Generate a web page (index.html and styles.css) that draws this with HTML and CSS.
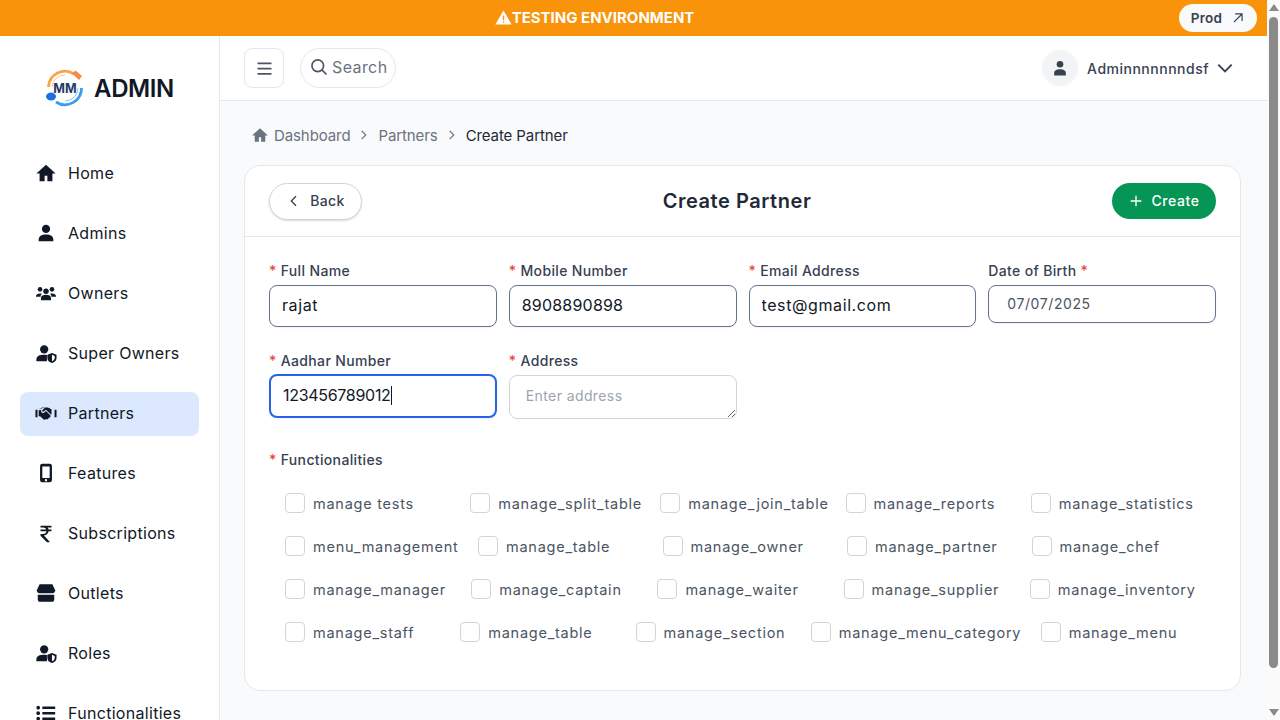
FILE: index.html
```html
<!DOCTYPE html>
<html lang="en">
<head>
    <title>Create Partner</title>
    <link rel="stylesheet" href="styles.css">
</head>
<body>
<div class="page">
<div class="banner">
    <div class="banner-title">
        <svg class="banner-icon" viewBox="0 0 24 24"><path fill="#fff" fill-rule="evenodd" d="M12 2 23.500 22H.5zM11 9v7h2V9zm0 8.500v2h2v-2z"/></svg>
        <span>TESTING ENVIRONMENT</span>
    </div>
    <a class="prod-link" href="#">Prod
        <svg viewBox="0 0 24 24" class="prod-icon"><path d="M5 19 18 6M7 5h12v12" fill="none" stroke="currentColor" stroke-width="2"/></svg>
    </a>
</div>
<div class="app">
    <aside class="sidebar">
        <div class="brand">
            <svg class="logo" viewBox="0 0 40 40">
                <path d="M3.500 19A16.500 16.500 0 0 1 29 6" fill="none" stroke="#f9a34a" stroke-width="2.800"/>
                <path d="M7 19A13 13 0 0 1 20 7" fill="none" stroke="#fbc58c" stroke-width="1"/>
                <path d="M27 5.500l3.500-3 6.500 5.500-3 4z" fill="#f58a4b"/>
                <path d="M36.500 20A16.500 16.500 0 0 1 11 34" fill="none" stroke="#3b9bf0" stroke-width="2.800"/>
                <path d="M33 20A13 13 0 0 1 20 33" fill="none" stroke="#8cc6f7" stroke-width="1"/>
                <ellipse cx="6" cy="28.500" rx="5" ry="4" fill="#1f6fe0"/>
                <text x="20" y="24.500" class="logo-text">MM</text>
            </svg>
            <span class="brand-name">ADMIN</span>
        </div>
        <nav class="nav">
            <a class="nav-item" href="#"><svg class="nav-icon" viewBox="0 0 24 24"><path d="M12 3 1.500 12.500H5V21h5.500v-6h3v6H19v-8.500h3.500z"/></svg>Home</a>
            <a class="nav-item" href="#"><svg class="nav-icon" viewBox="0 0 24 24"><circle cx="12" cy="7.500" r="4.500"/><path d="M4 21v-2c0-3.500 3-5.500 8-5.500s8 2 8 5.500v2z"/></svg>Admins</a>
            <a class="nav-item" href="#"><svg class="nav-icon" viewBox="0 0 24 24"><circle cx="5.500" cy="8" r="2.500"/><circle cx="18.500" cy="8" r="2.500"/><circle cx="12" cy="10" r="3"/><path d="M1 16c0-2.500 2-3.500 4.500-3.500 1 0 1.500.2 2 .4C6.500 14 6 15 6 16zM23 16c0-2.500-2-3.500-4.500-3.500-1 0-1.500.2-2 .4 1 1.100 1.500 2.100 1.500 3.100zM6.500 20v-2.500c0-2.500 2.500-3.500 5.500-3.500s5.500 1 5.500 3.500V20z"/></svg>Owners</a>
            <a class="nav-item" href="#"><svg class="nav-icon" viewBox="0 0 24 24"><circle cx="10" cy="8" r="4.500"/><path d="M1.500 21v-2c0-3.500 3.500-5 8.500-5 1 0 2 .1 3 .3V21z"/><path d="M18.500 12l5 2v3.500c0 2.800-2.100 4.800-5 5.500-2.900-.7-5-2.700-5-5.500V14zm0 2v7c1.700-.6 3-1.800 3-3.500V15.300z" fill-rule="evenodd"/></svg>Super Owners</a>
            <a class="nav-item active" href="#"><svg class="nav-icon" viewBox="0 0 24 24"><path d="M.5 8.500h2.200v8H.5zM21.300 8.500h2.200v8h-2.200zM4 8l4-2h3l-3 3c-.7.8.4 2 1.300 1.300L12 8.500l5.500 5.500.5-1V8l-4-2h-1l-2 0zM4 9v6.500l1.500 0 4 3.500c.8.600 2 .3 2.300-.5l1 .4c.8.300 1.700-.3 1.700-1.200.8.200 1.700-.5 1.600-1.400.7 0 1.300-.9.800-1.700L12 9.800 9.800 11.600c-2 1.300-4-1-2.800-2.800z"/></svg>Partners</a>
            <a class="nav-item" href="#"><svg class="nav-icon" viewBox="0 0 24 24"><path fill-rule="evenodd" d="M8 2h8a2.500 2.500 0 0 1 2.500 2.500v15A2.500 2.500 0 0 1 16 22H8a2.500 2.500 0 0 1-2.500-2.500v-15A2.500 2.500 0 0 1 8 2zm0 3v12.500h8V5zm4 13.500a1.300 1.300 0 1 0 0 2.600 1.300 1.300 0 0 0 0-2.600z"/></svg>Features</a>
            <a class="nav-item" href="#"><svg class="nav-icon" viewBox="0 0 24 24"><path d="M6 4h12v2h-4.300c.6.700 1 1.400 1.200 2.200H18v2h-3.100c-.4 2.600-2.400 4.200-5.100 4.500L16 21.500V22h-3l-7-7v-2h3c1.900 0 3.200-1 3.600-2.800H6v-2h6.300C11.800 7 10.600 6 9 6H6z"/></svg>Subscriptions</a>
            <a class="nav-item" href="#"><svg class="nav-icon" viewBox="0 0 24 24"><path d="M5 2.500h14l3 6.500c0 2-1.300 3.200-3 3.200H5c-1.700 0-3-1.200-3-3.200z"/><path d="M3 14h18v5c0 1.500-1 2.500-2.500 2.500h-13C4 21.500 3 20.500 3 19z"/></svg>Outlets</a>
            <a class="nav-item" href="#"><svg class="nav-icon" viewBox="0 0 24 24"><circle cx="10" cy="8" r="4.500"/><path d="M1.500 21v-2c0-3.500 3.500-5 8.500-5 1 0 2 .1 3 .3V21z"/><path d="M18.500 12l5 2v3.500c0 2.800-2.100 4.800-5 5.500-2.900-.7-5-2.700-5-5.500V14zm0 2v7c1.700-.6 3-1.800 3-3.500V15.300z" fill-rule="evenodd"/></svg>Roles</a>
            <a class="nav-item" href="#"><svg class="nav-icon" viewBox="0 0 24 24"><path d="M8 5h14v2.500H8zM8 11h14v2.500H8zM8 17h14v2.500H8z"/><circle cx="3.500" cy="6.200" r="2"/><circle cx="3.500" cy="12.200" r="2"/><circle cx="3.500" cy="18.200" r="2"/></svg>Functionalities</a>
        </nav>
    </aside>
    <main class="main">
        <header class="topbar">
            <div class="topbar-left">
                <button class="menu-btn"><svg viewBox="0 0 24 24" class="menu-icon"><path d="M4 6h16M4 12h16M4 18h16" stroke="currentColor" stroke-width="2" fill="none"/></svg></button>
                <div class="search">
                    <svg viewBox="0 0 24 24" class="search-icon"><circle cx="10.500" cy="10.500" r="7" fill="none" stroke="currentColor" stroke-width="2"/><path d="M15.500 15.500 21 21" stroke="currentColor" stroke-width="2"/></svg>
                    <span>Search</span>
                </div>
            </div>
            <div class="user">
                <span class="avatar"><svg viewBox="0 0 24 24"><circle cx="12" cy="7.500" r="4"/><path d="M5 21v-3c0-3 3-4.500 7-4.500s7 1.500 7 4.500v3z"/></svg></span>
                <span class="user-name">Adminnnnnnndsf</span>
                <svg viewBox="0 0 24 24" class="chevron"><path d="M4 8l8 8 8-8" fill="none" stroke="currentColor" stroke-width="2.300"/></svg>
            </div>
        </header>
        <div class="content">
            <div class="crumbs">
                <svg viewBox="0 0 24 24" class="crumb-home"><path d="M12 3 1.500 12.500H5V21h5.500v-6h3v6H19v-8.500h3.500z"/></svg>
                <span>Dashboard</span>
                <svg viewBox="0 0 24 24" class="crumb-sep"><path d="M8 5l7 7-7 7" fill="none" stroke="currentColor" stroke-width="2"/></svg>
                <span>Partners</span>
                <svg viewBox="0 0 24 24" class="crumb-sep"><path d="M8 5l7 7-7 7" fill="none" stroke="currentColor" stroke-width="2"/></svg>
                <span class="crumb-current">Create Partner</span>
            </div>
            <section class="card">
                <div class="card-head">
                    <button class="back-btn"><svg viewBox="0 0 24 24"><path d="M15 5l-7 7 7 7" fill="none" stroke="currentColor" stroke-width="2"/></svg>Back</button>
                    <h1>Create Partner</h1>
                    <button class="create-btn"><svg viewBox="0 0 24 24"><path d="M12 4v16M4 12h16" fill="none" stroke="currentColor" stroke-width="2"/></svg>Create</button>
                </div>
                <form class="form">
                    <div class="form-grid">
                        <div class="field">
                            <label><span class="req">*</span> Full Name</label>
                            <input class="input" type="text" value="rajat">
                        </div>
                        <div class="field">
                            <label><span class="req">*</span> Mobile Number</label>
                            <input class="input mobile" type="text" value="8908890898">
                        </div>
                        <div class="field">
                            <label><span class="req">*</span> Email Address</label>
                            <input class="input" type="text" value="test@gmail.com">
                        </div>
                        <div class="field">
                            <label>Date of Birth <span class="req">*</span></label>
                            <div class="input date">07/07/2025</div>
                        </div>
                        <div class="field">
                            <label><span class="req">*</span> Aadhar Number</label>
                            <div class="input focused"><span>123456789012</span><i class="caret"></i></div>
                        </div>
                        <div class="field">
                            <label><span class="req">*</span> Address</label>
                            <textarea class="textarea" placeholder="Enter address"></textarea>
                        </div>
                    </div>
                    <div class="func">
                        <label><span class="req">*</span> Functionalities</label>
                        <div class="func-rows">
                            <div class="func-row">
                                <label class="check"><input type="checkbox"><span>manage tests</span></label>
                                <label class="check split"><input type="checkbox"><span>manage_split_table</span></label>
                                <label class="check"><input type="checkbox"><span>manage_join_table</span></label>
                                <label class="check"><input type="checkbox"><span>manage_reports</span></label>
                                <label class="check"><input type="checkbox"><span>manage_statistics</span></label>
                            </div>
                            <div class="func-row">
                                <label class="check menu-mgmt"><input type="checkbox"><span>menu_management</span></label>
                                <label class="check"><input type="checkbox"><span>manage_table</span></label>
                                <label class="check"><input type="checkbox"><span>manage_owner</span></label>
                                <label class="check"><input type="checkbox"><span>manage_partner</span></label>
                                <label class="check"><input type="checkbox"><span>manage_chef</span></label>
                            </div>
                            <div class="func-row">
                                <label class="check"><input type="checkbox"><span>manage_manager</span></label>
                                <label class="check"><input type="checkbox"><span>manage_captain</span></label>
                                <label class="check"><input type="checkbox"><span>manage_waiter</span></label>
                                <label class="check"><input type="checkbox"><span>manage_supplier</span></label>
                                <label class="check"><input type="checkbox"><span>manage_inventory</span></label>
                            </div>
                            <div class="func-row">
                                <label class="check"><input type="checkbox"><span>manage_staff</span></label>
                                <label class="check"><input type="checkbox"><span>manage_table</span></label>
                                <label class="check"><input type="checkbox"><span>manage_section</span></label>
                                <label class="check menu-cat"><input type="checkbox"><span>manage_menu_category</span></label>
                                <label class="check"><input type="checkbox"><span>manage_menu</span></label>
                            </div>
                        </div>
                    </div>
                </form>
            </section>
        </div>
    </main>
</div>
</div>
<div class="scrollbar">
    <i class="arrow-up"></i>
    <i class="thumb"></i>
    <i class="arrow-down"></i>
</div>
</body>
</html>
```

FILE: styles.css
```css
* {
  box-sizing: border-box;
}
html, body {
  margin: 0;
}
body {
  font-family: "Inter", "Liberation Sans", sans-serif;
  color: #111827;
  background: #f9fafb;
}
svg {
  display: block;
  flex-shrink: 0;
}
a {
  text-decoration: none;
  color: inherit;
}
button {
  font-family: inherit;
  cursor: pointer;
}
.page {
  width: 1267px;
}

.banner {
  height: 36px;
  background: #f8930a;
  display: flex;
  align-items: center;
  justify-content: center;
  position: relative;
  padding-right: 78px;
  color: #fff;
}
.banner-title {
  display: flex;
  align-items: center;
  font-size: 15px;
  font-weight: 700;
  padding-bottom: 1px;
}
.banner-icon {
  width: 17px;
  height: 17px;
}
.prod-link {
  position: absolute;
  right: 10px;
  top: 4px;
  height: 28px;
  width: 78px;
  border-radius: 14px;
  background: #f9fafb;
  color: #374151;
  font-size: 13.5px;
  font-weight: 600;
  letter-spacing: 0.3px;
  display: flex;
  align-items: center;
  justify-content: center;
  gap: 9px;
}
.prod-icon {
  width: 14px;
  height: 14px;
}

.app {
  display: flex;
}
.sidebar {
  width: 220px;
  height: 720px;
  flex-shrink: 0;
  background: #fff;
  border-right: 1px solid #e5e7eb;
  padding: 0 20px;
}
.brand {
  height: 104px;
  display: flex;
  align-items: center;
  justify-content: center;
  gap: 9px;
}
.logo {
  width: 40px;
  height: 40px;
}
.logo-text {
  font-size: 12.500px;
  font-weight: 700;
  fill: #1f3a68;
  text-anchor: middle;
}
.brand-name {
  font-size: 24px;
  font-weight: 600;
  letter-spacing: -0.4px;
  color: #111827;
}
.nav {
  display: flex;
  flex-direction: column;
  gap: 16px;
  margin-top: 12px;
}
.nav-item {
  height: 44px;
  border-radius: 8px;
  display: flex;
  align-items: center;
  gap: 11px;
  padding: 0 0 2px 15px;
  font-size: 16px;
  letter-spacing: 0.3px;
  color: #111827;
}
.nav-item.active {
  background: #dbe8fe;
}
.nav-icon {
  width: 22px;
  height: 22px;
  fill: #111827;
}

.main {
  flex: 1;
  min-width: 0;
}
.topbar {
  height: 65px;
  background: #fff;
  border-bottom: 1px solid #e5e7eb;
  display: flex;
  align-items: center;
  justify-content: space-between;
  padding: 0 24px;
}
.topbar-left {
  display: flex;
  align-items: center;
  gap: 16px;
}
.menu-btn {
  width: 40px;
  height: 40px;
  background: #fff;
  border: 1px solid #e5e7eb;
  border-radius: 8px;
  padding: 0;
  color: #4b5563;
  display: flex;
  align-items: center;
  justify-content: center;
}
.menu-icon {
  width: 21px;
  height: 21px;
}
.search {
  width: 96px;
  height: 40px;
  border: 1px solid #e5e7eb;
  border-radius: 20px;
  display: flex;
  align-items: center;
  gap: 3px;
  padding: 0 0 2px 8px;
  font-size: 16px;
  letter-spacing: 0.4px;
  color: #6b7280;
}
.search-icon {
  width: 20px;
  height: 20px;
  color: #4b5563;
}
.user {
  display: flex;
  align-items: center;
  gap: 9px;
  padding-right: 8px;
  color: #374151;
}
.avatar {
  width: 36px;
  height: 36px;
  border-radius: 50%;
  background: #f3f4f6;
  display: flex;
  align-items: center;
  justify-content: center;
}
.avatar svg {
  width: 20px;
  height: 20px;
  fill: #374151;
}
.user-name {
  font-size: 14px;
  font-weight: 500;
  letter-spacing: 0.5px;
}
.chevron {
  width: 20px;
  height: 20px;
  margin-left: -3px;
}

.content {
  padding: 24px 26px 24px 24px;
}
.crumbs {
  display: flex;
  align-items: center;
  height: 20px;
  padding-left: 8px;
  margin-bottom: 20px;
  font-size: 15px;
  letter-spacing: -0.1px;
  color: #6b7280;
}
.crumb-home {
  width: 18px;
  height: 18px;
  fill: #6b7280;
  margin: 0 5px 0 -1px;
}
.crumb-sep {
  width: 14px;
  height: 14px;
  margin: 0 7px;
}
.crumb-current {
  color: #1f2937;
}

.card {
  background: #fff;
  border: 1px solid #e5e7eb;
  border-radius: 16px;
  height: 526px;
}
.card-head {
  height: 71px;
  border-bottom: 1px solid #e5e7eb;
  display: flex;
  align-items: center;
  justify-content: space-between;
  padding: 0 24px;
}
.card-head h1 {
  margin: 0;
  font-size: 20px;
  font-weight: 600;
  letter-spacing: 0.55px;
  color: #1f2937;
}
.back-btn {
  width: 93px;
  height: 37px;
  background: #fff;
  border: 1px solid #d1d5db;
  border-radius: 19px;
  box-shadow: 0 1px 2px rgba(0, 0, 0, 0.15);
  color: #374151;
  font-size: 14px;
  font-weight: 500;
  letter-spacing: 0.4px;
  display: flex;
  align-items: center;
  justify-content: center;
  gap: 8px;
  padding: 0 0 1px;
}
.back-btn svg {
  width: 16px;
  height: 16px;
}
.create-btn {
  width: 104px;
  height: 36px;
  background: #059655;
  border: none;
  border-radius: 18px;
  color: #fff;
  font-size: 14px;
  font-weight: 500;
  letter-spacing: 0.6px;
  display: flex;
  align-items: center;
  justify-content: center;
  gap: 7px;
  padding: 0 0 1px;
}
.create-btn svg {
  width: 16px;
  height: 16px;
}

.form {
  padding: 24px 24px 0;
}
.form-grid {
  display: grid;
  grid-template-columns: repeat(4, 1fr);
  column-gap: 12px;
  row-gap: 24px;
}
.field label, .func > label {
  display: block;
  font-size: 14px;
  font-weight: 500;
  letter-spacing: 0.35px;
  color: #374151;
  line-height: 20px;
  margin-bottom: 4px;
}
.req {
  color: #ef4444;
}
.input {
  display: flex;
  align-items: center;
  width: 100%;
  height: 42px;
  border: 1px solid #64748b;
  border-radius: 8px;
  padding: 0 12px 2px;
  font-family: inherit;
  font-size: 16px;
  letter-spacing: 0.6px;
  color: #111827;
  background: #fff;
  box-shadow: 0 1px 2px rgba(0, 0, 0, 0.05);
  outline: none;
}
.mobile {
  letter-spacing: 0.2px;
}
.date {
  height: 38px;
  padding-left: 18px;
  font-size: 14px;
  color: #4b5563;
  letter-spacing: 0.6px;
}
.focused {
  border: 2px solid #2563eb;
  height: 44px;
  padding-left: 12px;
  margin-top: -1px;
  letter-spacing: -0.3px;
}
.caret {
  display: block;
  width: 1px;
  height: 19px;
  background: #111827;
}
.textarea {
  display: block;
  width: 100%;
  height: 44px;
  border: 1px solid #d1d5db;
  border-radius: 8px;
  padding: 11px 16px;
  font-family: inherit;
  font-size: 14px;
  letter-spacing: 0.4px;
  background: #fff;
  outline: none;
}
.textarea::placeholder {
  color: #9ca3af;
}

.func {
  margin-top: 31px;
}
.func > label {
  margin-bottom: 0;
}
.func-rows {
  padding: 23px 16px 0;
  display: flex;
  flex-direction: column;
  gap: 23px;
}
.func-row {
  display: flex;
  gap: 16px;
}
.check {
  flex: 1 1 0;
  display: flex;
  align-items: center;
  gap: 8px;
  height: 20px;
  font-size: 14.500px;
  letter-spacing: 0.75px;
  color: #4b5563;
  white-space: nowrap;
}
.check.split {
  min-width: 174px;
}
.check.menu-mgmt {
  min-width: 177px;
}
.check.menu-cat {
  min-width: 214px;
}
.check input {
  appearance: none;
  margin: 0;
  width: 20px;
  height: 20px;
  border: 1px solid #d1d5db;
  border-radius: 4px;
  background: #fff;
  flex-shrink: 0;
}

/* window scrollbar from the screenshot */
.scrollbar {
  position: fixed;
  top: 0;
  right: 0;
  bottom: 0;
  width: 13px;
  background: #fbfbfb;
  display: flex;
  flex-direction: column;
  align-items: center;
  padding: 4px 0;
}
.arrow-up, .arrow-down {
  display: block;
  width: 0;
  height: 0;
  border-left: 5px solid transparent;
  border-right: 5px solid transparent;
}
.arrow-up {
  border-bottom: 7px solid #8a8a8a;
}
.arrow-down {
  border-top: 7px solid #8a8a8a;
}
.thumb {
  display: block;
  width: 9px;
  height: 651px;
  margin: 6px 0 41px;
  background: #8a8a8a;
  border-radius: 5px;
}
```
